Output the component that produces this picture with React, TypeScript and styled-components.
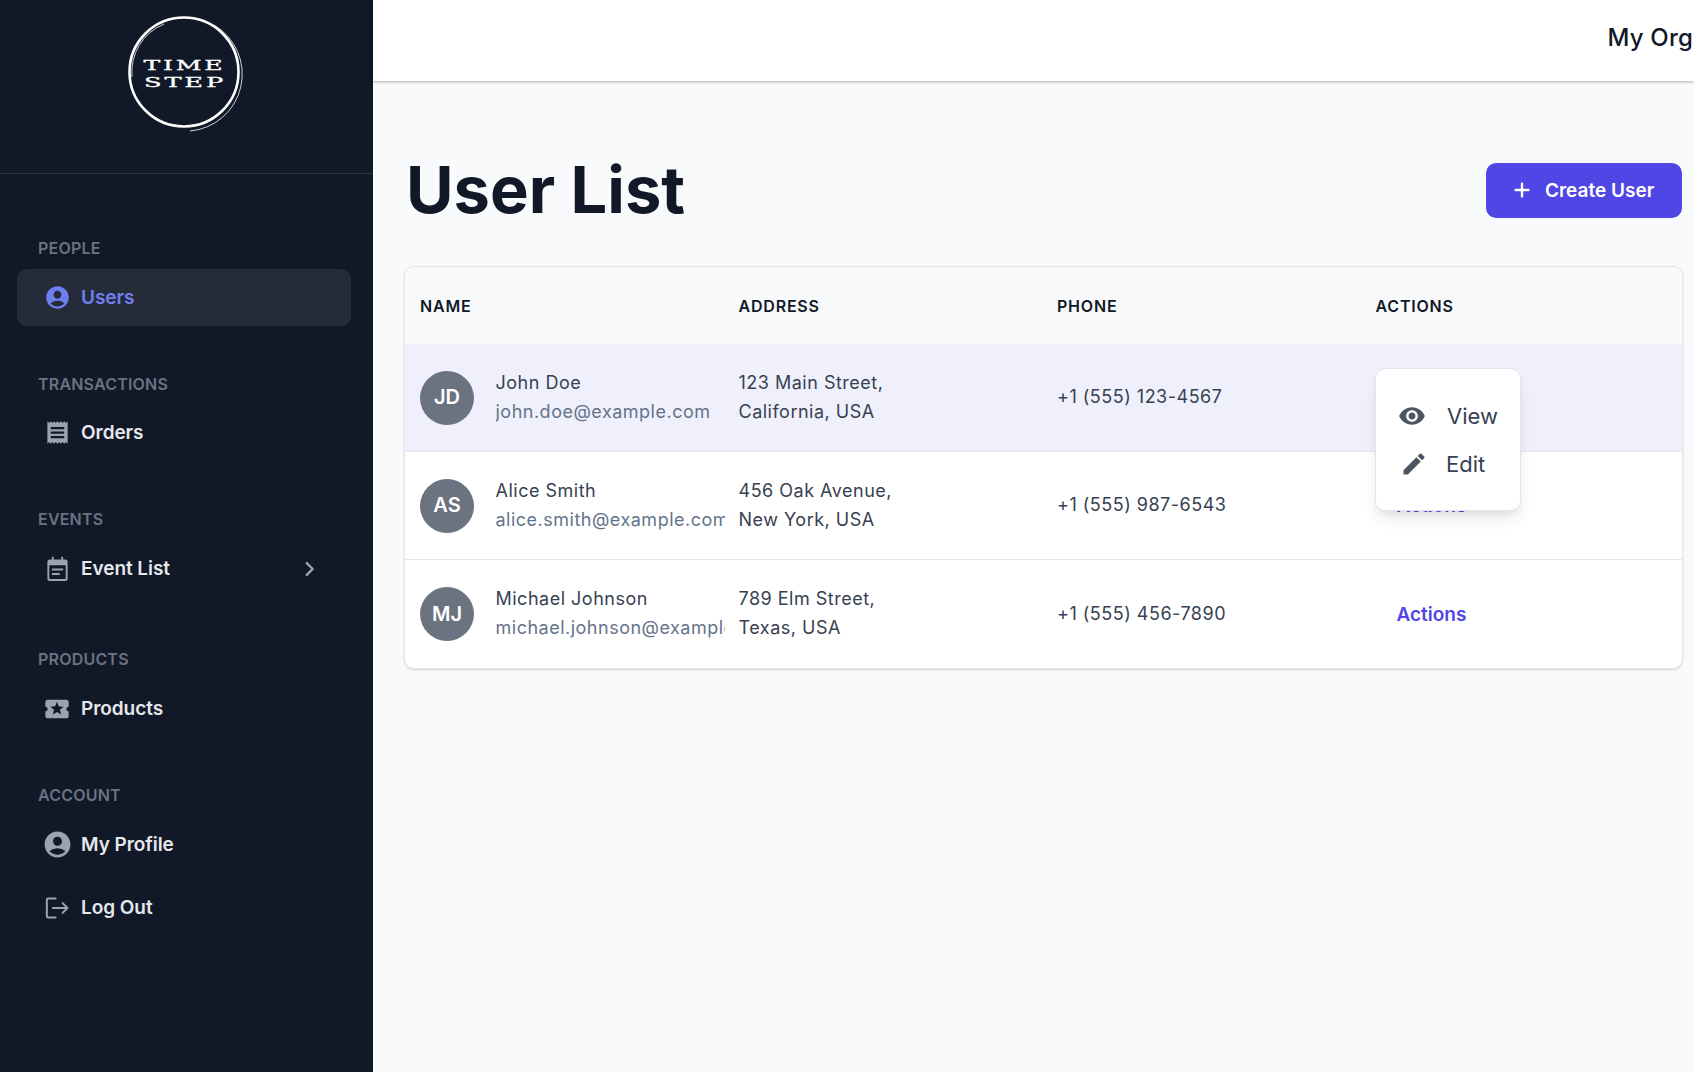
import React from "react";
import styled, { createGlobalStyle } from "styled-components";
import {
  MdAccountCircle,
  MdReceipt,
  MdLocalActivity,
  MdVisibility,
  MdEdit,
} from "react-icons/md";

const Global = createGlobalStyle`
  html, body { margin: 0; padding: 0; height: 100%; overflow: hidden; }
  body { font-family: Inter, "Liberation Sans", sans-serif; background: #f9fafb; }
  * { box-sizing: border-box; }
`;

const Shell = styled.div`
  display: flex;
  width: 1694px;
  height: 1072px;
  overflow: hidden;
`;

const Sidebar = styled.aside`
  width: 373px;
  flex: none;
  background: #111827;
  display: flex;
  flex-direction: column;
`;

const LogoArea = styled.div`
  height: 174px;
  flex: none;
  border-bottom: 1px solid #2b3442;
  display: flex;
  justify-content: center;
  padding-top: 15px;
`;

const Nav = styled.nav`
  display: flex;
  flex-direction: column;
  padding: 64px 22px 0 22px;
`;

const NavGroup = styled.div<{ $gap: number }>`
  display: flex;
  flex-direction: column;
  margin-bottom: ${(p) => p.$gap}px;
`;

const GroupLabel = styled.div<{ $gap: number }>`
  font-size: 16px;
  line-height: 20px;
  font-weight: 600;
  letter-spacing: 0.2px;
  color: #6b7280;
  padding-left: 16px;
  margin-bottom: ${(p) => p.$gap}px;
`;

const NavItem = styled.a<{ $active?: boolean }>`
  display: flex;
  align-items: center;
  gap: 8px;
  height: 57px;
  margin-left: -5px;
  padding: 0 28px 0 24px;
  border-radius: 10px;
  background: ${(p) => (p.$active ? "#252b39" : "transparent")};
  color: ${(p) => (p.$active ? "#6f7ff0" : "#e5e7eb")};
  font-size: 19px;
  font-weight: 600;
  letter-spacing: -0.05px;
  svg.lead { color: ${(p) => (p.$active ? "#6f7ff0" : "#9ca3af")}; flex: none; }
  & + & { margin-top: 6px; }
`;

const IconSlot = styled.span`
  width: 32px;
  height: 32px;
  flex: none;
  display: flex;
  align-items: center;
  justify-content: center;
`;

const Grow = styled.span`
  flex: 1;
`;

const ChevronGlyph = styled.svg`
  flex: none;
  color: #9ca3af;
`;

const Main = styled.main`
  flex: 1;
  min-width: 0;
  display: flex;
  flex-direction: column;
  background: #f9fafb;
`;

const TopBar = styled.header`
  height: 81px;
  flex: none;
  background: #ffffff;
  box-shadow: 0 1px 3px rgba(0, 0, 0, 0.3);
  display: flex;
  align-items: center;
  justify-content: flex-end;
  padding-bottom: 6px;
  position: relative;
  z-index: 1;
`;

const OrgName = styled.div`
  font-size: 24px;
  font-weight: 500;
  letter-spacing: 0.2px;
  color: #111827;
  white-space: nowrap;
  margin-right: 1px;
`;

const Content = styled.div`
  padding: 81px 12px 0 31px;
  display: flex;
  flex-direction: column;
`;

const TitleRow = styled.div`
  display: flex;
  align-items: center;
  justify-content: space-between;
  height: 56px;
  margin-bottom: 48px;
`;

const Title = styled.h1`
  margin: 0 0 0 2px;
  font-size: 65px;
  line-height: 56px;
  font-weight: 700;
  color: #111827;
`;

const CreateButton = styled.button`
  display: flex;
  align-items: center;
  gap: 12px;
  height: 55px;
  width: 196px;
  padding: 0 0 0 25px;
  background: #4f46e5;
  color: #ffffff;
  border: none;
  border-radius: 10px;
  font-family: inherit;
  font-size: 19px;
  font-weight: 600;
`;

const PlusGlyph = styled.svg`
  flex: none;
`;

const TableCard = styled.div`
  width: 1279px;
  background: #ffffff;
  border: 1px solid #e5e7eb;
  border-radius: 10px;
  box-shadow: 0 1px 2px rgba(0, 0, 0, 0.15);
  position: relative;
`;

const Row = styled.div<{ $tone?: "head" | "hot" | "plain"; $last?: boolean }>`
  display: grid;
  grid-template-columns: repeat(4, 318.5px);
  align-items: center;
  height: ${(p) => (p.$tone === "head" ? "77px" : "108px")};
  background: ${(p) =>
    p.$tone === "head" ? "#f9fafb" : p.$tone === "hot" ? "#eff0fc" : "#ffffff"};
  border-bottom: ${(p) =>
    p.$tone === "head" || p.$last ? "none" : "1px solid #e5e7eb"};
  border-radius: ${(p) =>
    p.$tone === "head" ? "10px 10px 0 0" : p.$last ? "0 0 10px 10px" : "0"};
`;

const HeadCell = styled.div`
  padding-left: 15px;
  font-size: 16px;
  font-weight: 600;
  letter-spacing: 0.8px;
  color: #111827;
`;

const Cell = styled.div`
  padding: 0 0 2px 15px;
  min-width: 0;
  font-size: 18px;
  letter-spacing: 0.5px;
  line-height: 29px;
  color: #374151;
`;

const UserCell = styled(Cell)`
  display: flex;
  align-items: center;
  gap: 21.5px;
  margin-right: -1.5px;
  padding-bottom: 0;
`;

const ActionCell = styled(Cell)`
  padding-bottom: 0;
`;

const Avatar = styled.div`
  width: 54px;
  height: 54px;
  flex: none;
  border-radius: 50%;
  background: #6b7280;
  color: #ffffff;
  display: flex;
  align-items: center;
  justify-content: center;
  font-size: 20px;
  font-weight: 600;
  letter-spacing: 0;
`;

const UserText = styled.div`
  min-width: 0;
  flex: 1;
  overflow: hidden;
  white-space: nowrap;
  padding-bottom: 2px;
`;

const Email = styled.div`
  color: #64748b;
`;

const ActionsLink = styled.a`
  display: inline-block;
  margin-left: 21px;
  font-size: 19px;
  letter-spacing: 0;
  font-weight: 600;
  color: #4f46e5;
`;

const Menu = styled.div`
  position: absolute;
  left: 970px;
  top: 101px;
  width: 146px;
  height: 143px;
  background: #ffffff;
  border: 1px solid #e2e4ee;
  border-radius: 10px;
  box-shadow: 0 10px 15px -3px rgba(0, 0, 0, 0.1), 0 4px 6px -2px rgba(0, 0, 0, 0.05);
  padding: 32px 0 0 22px;
  display: flex;
  flex-direction: column;
  gap: 18px;
`;

const MenuItem = styled.div`
  display: flex;
  align-items: center;
  gap: 21px;
  height: 30px;
  font-size: 22px;
  color: #374151;
  svg { color: #4b5563; flex: none; }
`;

const PencilIcon = styled(MdEdit)`
  margin: 0 -3px 0 2px;
`;

const EventIcon = ({ size, className }: { size: number; className?: string }) => (
  <svg className={className} width={size} height={size} viewBox="0 0 24 24" fill="currentColor">
    <path
      fillRule="evenodd"
      d="M7 1.5h1.6V4h6.8V1.5H17V4h2a2 2 0 0 1 2 2v15a2 2 0 0 1-2 2H5a2 2 0 0 1-2-2V6a2 2 0 0 1 2-2h2zM4.7 9v11.6a.7.7 0 0 0 .7.7h13.2a.7.7 0 0 0 .7-.7V9z"
    />
    <path d="M7 12h10v1.8H7zM7 16h7v1.8H7z" />
  </svg>
);

const LogoutIcon = ({ size, className }: { size: number; className?: string }) => (
  <svg className={className} width={size} height={size} viewBox="0 0 24 24" fill="none" stroke="currentColor" strokeWidth="1.7" strokeLinecap="round" strokeLinejoin="round">
    <path d="M10.8 3.8H4.3a1 1 0 0 0-1 1v14.4a1 1 0 0 0 1 1h6.5" />
    <path d="M8.4 12h12.6M16.8 7.8L21 12l-4.2 4.2" />
  </svg>
);

const users = [
  { initials: "JD", name: "John Doe", email: "john.doe@example.com", a1: "123 Main Street,", a2: "California, USA", phone: "+1 (555) 123-4567", tone: "hot" as const },
  { initials: "AS", name: "Alice Smith", email: "alice.smith@example.com", a1: "456 Oak Avenue,", a2: "New York, USA", phone: "+1 (555) 987-6543", tone: "plain" as const },
  { initials: "MJ", name: "Michael Johnson", email: "michael.johnson@example.com", a1: "789 Elm Street,", a2: "Texas, USA", phone: "+1 (555) 456-7890", tone: "plain" as const },
];

const Logo = () => (
  <svg width="122" height="118" viewBox="0 0 122 118" fill="none">
    <circle cx="58" cy="57" r="54.5" stroke="#fff" strokeWidth="2.6" />
    <path d="M6 62 A52 52 0 0 1 38 9" stroke="#fff" strokeWidth="0.8" />
    <path d="M88 10 A57 57 0 0 1 64 116" stroke="#fff" strokeWidth="0.8" />
    <text x="58.5" y="55" textAnchor="middle" textLength="82" lengthAdjust="spacingAndGlyphs" fontFamily="'DejaVu Serif', serif" fontWeight="400" fontSize="13.5" letterSpacing="1.5" fill="#fff" stroke="#fff" strokeWidth="0.3">TIME</text>
    <text x="59" y="72" textAnchor="middle" textLength="82" lengthAdjust="spacingAndGlyphs" fontFamily="'DejaVu Serif', serif" fontWeight="400" fontSize="13.5" letterSpacing="1.5" fill="#fff" stroke="#fff" strokeWidth="0.3">STEP</text>
  </svg>
);

const groups = [
  { label: "PEOPLE", labelGap: 11, gap: 48, items: [{ Icon: MdAccountCircle, size: 27, text: "Users", active: true }] },
  { label: "TRANSACTIONS", labelGap: 10, gap: 48, items: [{ Icon: MdReceipt, size: 27, text: "Orders" }] },
  { label: "EVENTS", labelGap: 11, gap: 52, items: [{ Icon: EventIcon, size: 27, text: "Event List", chevron: true }] },
  { label: "PRODUCTS", labelGap: 11, gap: 48, items: [{ Icon: MdLocalActivity, size: 28, text: "Products" }] },
  { label: "ACCOUNT", labelGap: 11, gap: 0, items: [{ Icon: MdAccountCircle, size: 31, text: "My Profile" }, { Icon: LogoutIcon, size: 28, text: "Log Out" }] },
];

export default function App() {
  return (
    <Shell>
      <Global />
      <Sidebar>
        <LogoArea>
          <Logo />
        </LogoArea>
        <Nav>
          {groups.map((g) => (
            <NavGroup key={g.label} $gap={g.gap}>
              <GroupLabel $gap={g.labelGap}>{g.label}</GroupLabel>
              {g.items.map((it: any) => (
                <NavItem key={it.text} $active={it.active}>
                  <IconSlot>
                    <it.Icon className="lead" size={it.size} />
                  </IconSlot>
                  {it.text}
                  <Grow />
                  {it.chevron && (
                    <ChevronGlyph width="26" height="26" viewBox="0 0 24 24" fill="none" stroke="currentColor" strokeWidth="2.2" strokeLinecap="round" strokeLinejoin="round">
                      <path d="M9 6.5l5.5 5.5L9 17.5" />
                    </ChevronGlyph>
                  )}
                </NavItem>
              ))}
            </NavGroup>
          ))}
        </Nav>
      </Sidebar>
      <Main>
        <TopBar>
          <OrgName>My Org</OrgName>
        </TopBar>
        <Content>
          <TitleRow>
            <Title>User List</Title>
            <CreateButton>
              <PlusGlyph width="22" height="22" viewBox="0 0 24 24" fill="none" stroke="currentColor" strokeWidth="2.6" strokeLinecap="round">
                <path d="M12 5v14M5 12h14" />
              </PlusGlyph>
              Create User
            </CreateButton>
          </TitleRow>
          <TableCard>
            <Row $tone="head">
              <HeadCell>NAME</HeadCell>
              <HeadCell>ADDRESS</HeadCell>
              <HeadCell>PHONE</HeadCell>
              <HeadCell>ACTIONS</HeadCell>
            </Row>
            {users.map((u, i) => (
              <Row key={u.initials} $tone={u.tone} $last={i === users.length - 1}>
                <UserCell>
                  <Avatar>{u.initials}</Avatar>
                  <UserText>
                    {u.name}
                    <Email>{u.email}</Email>
                  </UserText>
                </UserCell>
                <Cell>
                  {u.a1}
                  <br />
                  {u.a2}
                </Cell>
                <Cell>{u.phone}</Cell>
                <ActionCell>
                  <ActionsLink>Actions</ActionsLink>
                </ActionCell>
              </Row>
            ))}
            <Menu>
              <MenuItem>
                <MdVisibility size={28} />
                View
              </MenuItem>
              <MenuItem>
                <PencilIcon size={28} />
                Edit
              </MenuItem>
            </Menu>
          </TableCard>
        </Content>
      </Main>
    </Shell>
  );
}
